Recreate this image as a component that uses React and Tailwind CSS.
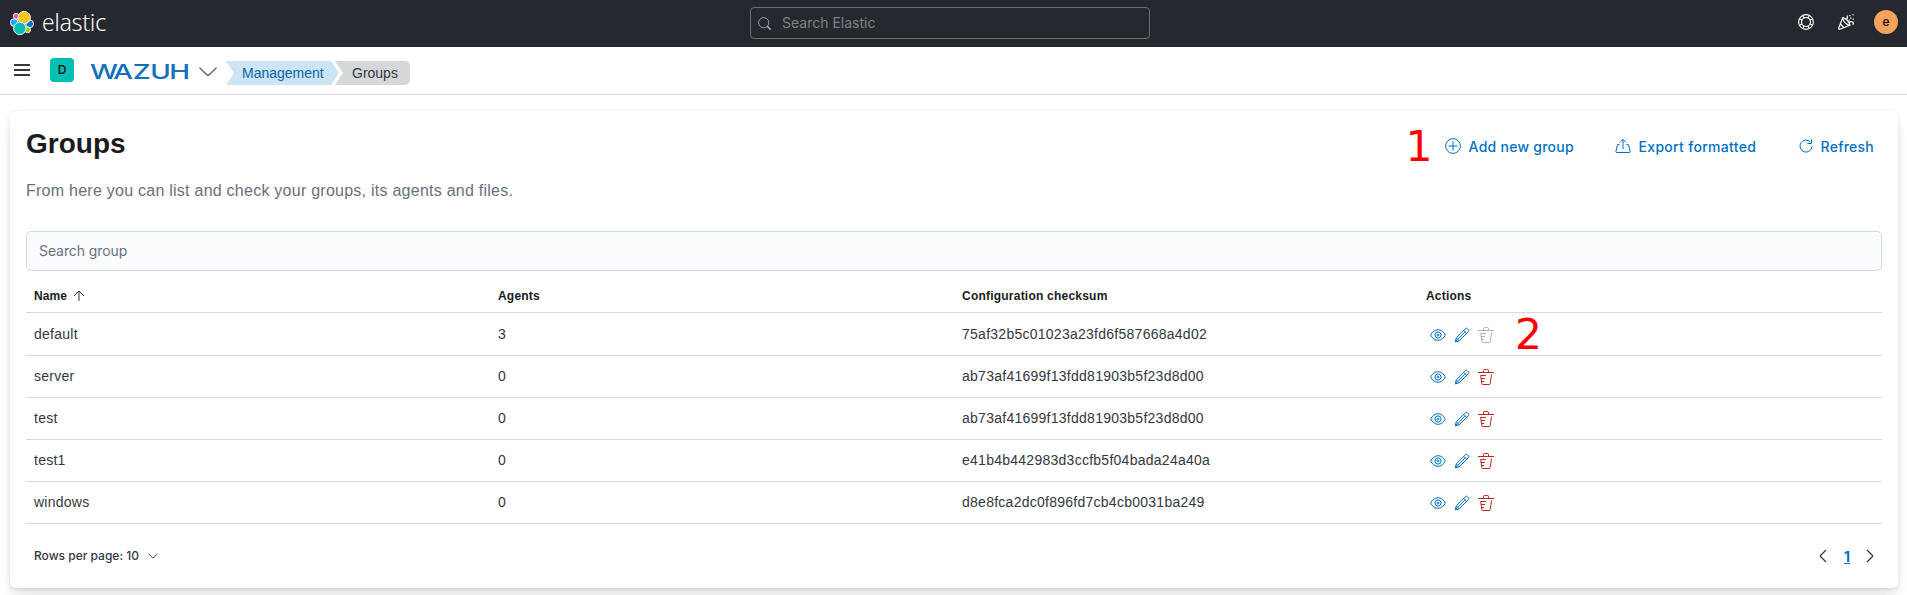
const rows = [
  { name: 'default', agents: 3, sum: '75af32b5c01023a23fd6f587668a4d02', locked: true },
  { name: 'server', agents: 0, sum: 'ab73af41699f13fdd81903b5f23d8d00' },
  { name: 'test', agents: 0, sum: 'ab73af41699f13fdd81903b5f23d8d00' },
  { name: 'test1', agents: 0, sum: 'e41b4b442983d3ccfb5f04bada24a40a' },
  { name: 'windows', agents: 0, sum: 'd8e8fca2dc0f896fd7cb4cb0031ba249' },
];

function Icon({ size = 16, className = '', children, sw = 1 }) {
  return (
    <svg width={size} height={size} viewBox="0 0 16 16" fill="none" stroke="currentColor" strokeWidth={sw} className={`shrink-0 ${className}`}>
      {children}
    </svg>
  );
}

function ElasticMark() {
  return (
    <svg width="24" height="24" viewBox="0 0 24 24" className="shrink-0">
      <g stroke="#fff" strokeWidth="1">
        <circle cx="4.3" cy="11.6" r="3.9" fill="#1BA9F5" />
        <circle cx="6.3" cy="5.3" r="2.9" fill="#F04E98" />
        <circle cx="19.6" cy="12.8" r="3.9" fill="#0077CC" />
        <circle cx="17.6" cy="18.8" r="2.9" fill="#93C90E" />
        <circle cx="14.2" cy="6.6" r="6.2" fill="#FEC514" />
        <circle cx="9.8" cy="17.4" r="6.2" fill="#00BFB3" />
      </g>
    </svg>
  );
}

function TopBar() {
  return (
    <header className="grid h-[47px] grid-cols-[750px_400px_1fr] bg-[#25282f]">
      <div className="flex items-center pl-[10px] pb-[1px]">
        <ElasticMark />
        <svg width="72" height="40" viewBox="0 0 72 40" className="ml-[6px] overflow-visible">
          <text x="2" y="28.2" textLength="64" lengthAdjust="spacingAndGlyphs" fill="#fff" stroke="#fff" strokeWidth=".15" fontSize="23" fontWeight="300" fontFamily="'Open Sans', 'Noto Sans', sans-serif">elastic</text>
        </svg>
      </div>
      <div className="mt-[7px] flex h-8 items-center rounded-[4px] border border-[#6b6d71] pl-[7px]">
        <Icon size={13} className="text-[#b4b5b8]">
          <circle cx="7" cy="7" r="6.3" />
          <path d="M11.4 11.4L15.5 15.5" strokeWidth="1.8" />
        </Icon>
        <span className="ml-[11px] text-[14px] leading-5 text-[#7f8185]">Search Elastic</span>
      </div>
      <div className="flex items-center justify-end gap-6 pr-[9px] pb-[3px] text-white">
        <Icon sw={1.1}>
          <circle cx="8" cy="8" r="7.4" />
          <circle cx="8" cy="8" r="4.5" />
          <path d="M1.900 5L4.400 6.300M5 1.900L6.300 4.400M14.100 5L11.600 6.300M11 1.900L9.700 4.400M1.900 11L4.400 9.700M5 14.100L6.300 11.600M14.100 11L11.600 9.700M11 14.100L9.700 11.600" />
        </Icon>
        <Icon sw={1.2}>
          <path d="M4.700 3.600L.7 14.200c-.2.6.4 1.200 1 1L12 11.200c-1-3.400-3.600-6.600-7.300-7.600zM2.400 10l3.600 3.600M4.600 4.600c1 2.900 3.200 5.200 6.200 6.500" />
          <path d="M8.300 5.600c1.300-1 1.500-2.400.7-4.200M10.800 8.600c1.500-1.100 3-1.200 4.200-.2.6.6.4 1.900-.4 2.200" />
          <path d="M11.200 1.700h1.200M14.500.9h1.200M12.200 4.200h1.200M14.700 5.200h1.200M10.700 6.200h1.200" />
        </Icon>
        <div className="-ml-[4px] flex h-6 w-6 items-center justify-center rounded-full bg-[#f5a35c] text-[12px] font-medium text-black">e</div>
      </div>
    </header>
  );
}

function NavBar() {
  return (
    <nav className="flex h-12 items-start border-b border-[#d3dae6] bg-white">
      <svg width="16" height="13" viewBox="0 0 16 13" className="ml-[14px] mt-[17px]" fill="#343741">
        <rect y="0" width="16" height="2" />
        <rect y="5" width="16" height="2" />
        <rect y="10" width="16" height="2" />
      </svg>
      <div className="ml-5 mt-[11px] flex h-6 w-6 items-center justify-center rounded-[4px] bg-[#00bfb3] text-[12px] font-medium text-black">D</div>
      <svg width="104" height="26" viewBox="0 0 104 26" className="ml-[15px] mt-[11px]">
        <text transform="scale(1.36 1)" x="0.700 17.900 32.200 45 59" y="20.700" fill="#1470b8" fontSize="20.500" fontWeight="500" fontFamily="Inter, sans-serif">WAZUH</text>
      </svg>
      <svg width="18" height="10" viewBox="0 0 18 10" className="ml-[6px] mt-[20px]" fill="none" stroke="#5a5e69" strokeWidth="1.300">
        <path d="M.5.8L8.100 7.900Q9 8.600 9.900 7.900L17.500.8" />
      </svg>
      <div className="ml-[9px] mt-[14px] flex h-6 font-['Liberation_Sans',Arial,sans-serif] text-[14px] leading-6">
        <span className="w-[113px] bg-[#cce4f5] pl-4 text-[#0b64a8] [clip-path:polygon(0_0,calc(100%-8px)_0,100%_50%,calc(100%-8px)_100%,0_100%,8px_50%)]">Management</span>
        <span className="-ml-[4px] w-[75px] rounded-r-[5px] bg-[#d6d7d9] pl-[17px] text-[#343741] [clip-path:polygon(0_0,100%_0,100%_100%,0_100%,8px_50%)]">Groups</span>
      </div>
    </nav>
  );
}

function RowActions({ locked }) {
  return (
    <div className="flex gap-2 pl-1 text-[#0071c2]">
      <Icon>
        <path d="M.6 8C2.300 4.800 5 2.700 8 2.700s5.700 2.100 7.400 5.300C13.700 11.200 11 13.300 8 13.300S2.300 11.200.6 8z" />
        <circle cx="8" cy="8" r="3.100" />
        <circle cx="8" cy="8" r="1" />
      </Icon>
      <Icon>
        <path d="M11.700 1.500a1 1 0 011.400 0l1.500 1.500a1 1 0 010 1.400L5.200 13.800l-3.800.9.900-3.900zM9.800 3.400L12.700 6.300M2.300 10.800L5.200 13.800M4 12.200L11.300 4.800" />
        <path d="M1 15.200l.8-3 2.300 2.300z" fill="currentColor" stroke="none" />
      </Icon>
      <Icon className={locked ? 'text-[#abb4c4]' : 'text-[#bd271e]'}>
        <path d="M0 3.500h16M5.500 3.500v-2q0-1 1-1h3q1 0 1 1v2M2.700 6.500l1.100 8q.1 1 1 1h6.400q.9 0 1-1l1.300-9M2.500 6.500h5.500M3 9.500h4M3.400 12.500h2.600" />
      </Icon>
    </div>
  );
}

function Panel() {
  return (
    <main className="mx-[10px] mt-4 flex h-[477px] w-[1888px] flex-col rounded-[6px] bg-white px-4 font-['Liberation_Sans',Arial,sans-serif] text-[#343741] shadow-[0_0.9px_4px_-1px_rgba(0,0,0,0.08),0_2.6px_8px_-1px_rgba(0,0,0,0.06),0_5.7px_12px_-1px_rgba(0,0,0,0.05),0_15px_15px_-1px_rgba(0,0,0,0.04)]">
      <div className="flex h-[64px] justify-between pt-4">
        <h1 className="text-[28px] font-bold leading-[34px] text-[#1a1c21]">Groups</h1>
        <div className="-mt-[1px] flex h-10 items-center font-[Inter,sans-serif] text-[14px] font-medium text-[#0071c2]">
          <span className="mr-[12px] mt-[2px] font-['DejaVu_Sans',sans-serif] text-[42.5px] font-normal leading-10 text-[#ff0000]">1</span>
          <div className="flex w-[170px] items-center gap-2 tracking-[0.26px]">
            <Icon><circle cx="8" cy="8" r="7.400" /><path d="M8 3.500v9M3.500 8h9" /></Icon>
            Add new group
          </div>
          <div className="flex w-[183px] items-center gap-2 tracking-[0.3px]">
            <Icon>
              <path d="M8 11V1.500M4.800 4.500L8 1.300l3.200 3.200M4.500 6.500h-2L.9 13.500q-.2 1 .9 1h12.400q1.100 0 .9-1l-1.600-7h-2" />
            </Icon>
            Export formatted
          </div>
          <div className="flex items-center gap-[7px] pr-2 tracking-[0.24px]">
            <Icon>
              <path d="M12.400 4A6 6 0 1 0 14 8.300M13.500 1.500v4h-4" />
            </Icon>
            Refresh
          </div>
        </div>
      </div>
      <p className="pt-1 text-[16px] leading-6 tracking-[0.25px] text-[#69707d]">From here you can list and check your groups, its agents and files.</p>
      <div className="mt-7 flex h-10 shrink-0 items-center rounded-[5px] border border-[#d0d8e8] bg-[#fbfcfd] pb-[2px] pl-3 font-[Inter,sans-serif] text-[14px] tracking-[-0.08px] text-[#69707d]">Search group</div>
      <div className="grid h-[42px] shrink-0 grid-cols-4 items-center border-b border-[#d3dae6] pt-2 text-[12px] font-bold text-[#1a1c21]">
        <span className="flex items-center gap-[4px] pl-2 tracking-[0.1px]">
          Name
          <Icon className="text-[#343741]" size={16}><path d="M8 13V3M3 8l5-5 5 5" /></Icon>
        </span>
        <span className="pl-2 tracking-[0.2px]">Agents</span>
        <span className="pl-2 tracking-[0.22px]">Configuration checksum</span>
        <span className="pl-2 tracking-[0.2px]">Actions</span>
      </div>
      {rows.map((r) => (
        <div key={r.name} className={`grid shrink-0 grid-cols-4 items-center border-b border-[#d3dae6] text-[14px] leading-[21px] ${r.locked ? 'h-[43px] pt-[1px]' : 'h-[42px]'}`}>
          <span className="pl-2 tracking-[0.25px]">{r.name}</span>
          <span className="pl-2">{r.agents}</span>
          <span className="pl-2 tracking-[0.26px]">{r.sum}</span>
          <span className="flex items-center pl-2">
            <RowActions locked={r.locked} />
            {r.locked && <span className="ml-[21px] font-['DejaVu_Sans',sans-serif] text-[42.5px] leading-[40px] text-[#ff0000]">2</span>}
          </span>
        </div>
      ))}
      <div className="flex h-[64px] items-center justify-between pl-2 font-[Inter,sans-serif] text-[12px] font-medium">
        <span className="flex items-center gap-2">
          Rows per page: 10
          <Icon size={12} sw={1.3}><path d="M2 5l5.300 5.300q.7.700 1.400 0L14 5" /></Icon>
        </span>
        <span className="flex items-center gap-[12px] pr-1">
          <Icon sw={1.3}><path d="M10 2L4.500 7.500q-.5.500 0 1L10 14" /></Icon>
          <span className="text-[14px] font-bold text-[#0071c2] underline">1</span>
          <Icon sw={1.3}><path d="M5 2l5.500 5.500q.5.500 0 1L5 14" /></Icon>
        </span>
      </div>
    </main>
  );
}

export default function App() {
  return (
    <div className="h-[595px] w-[1907px] overflow-hidden bg-white font-[Inter,sans-serif]">
      <TopBar />
      <NavBar />
      <Panel />
    </div>
  );
}
